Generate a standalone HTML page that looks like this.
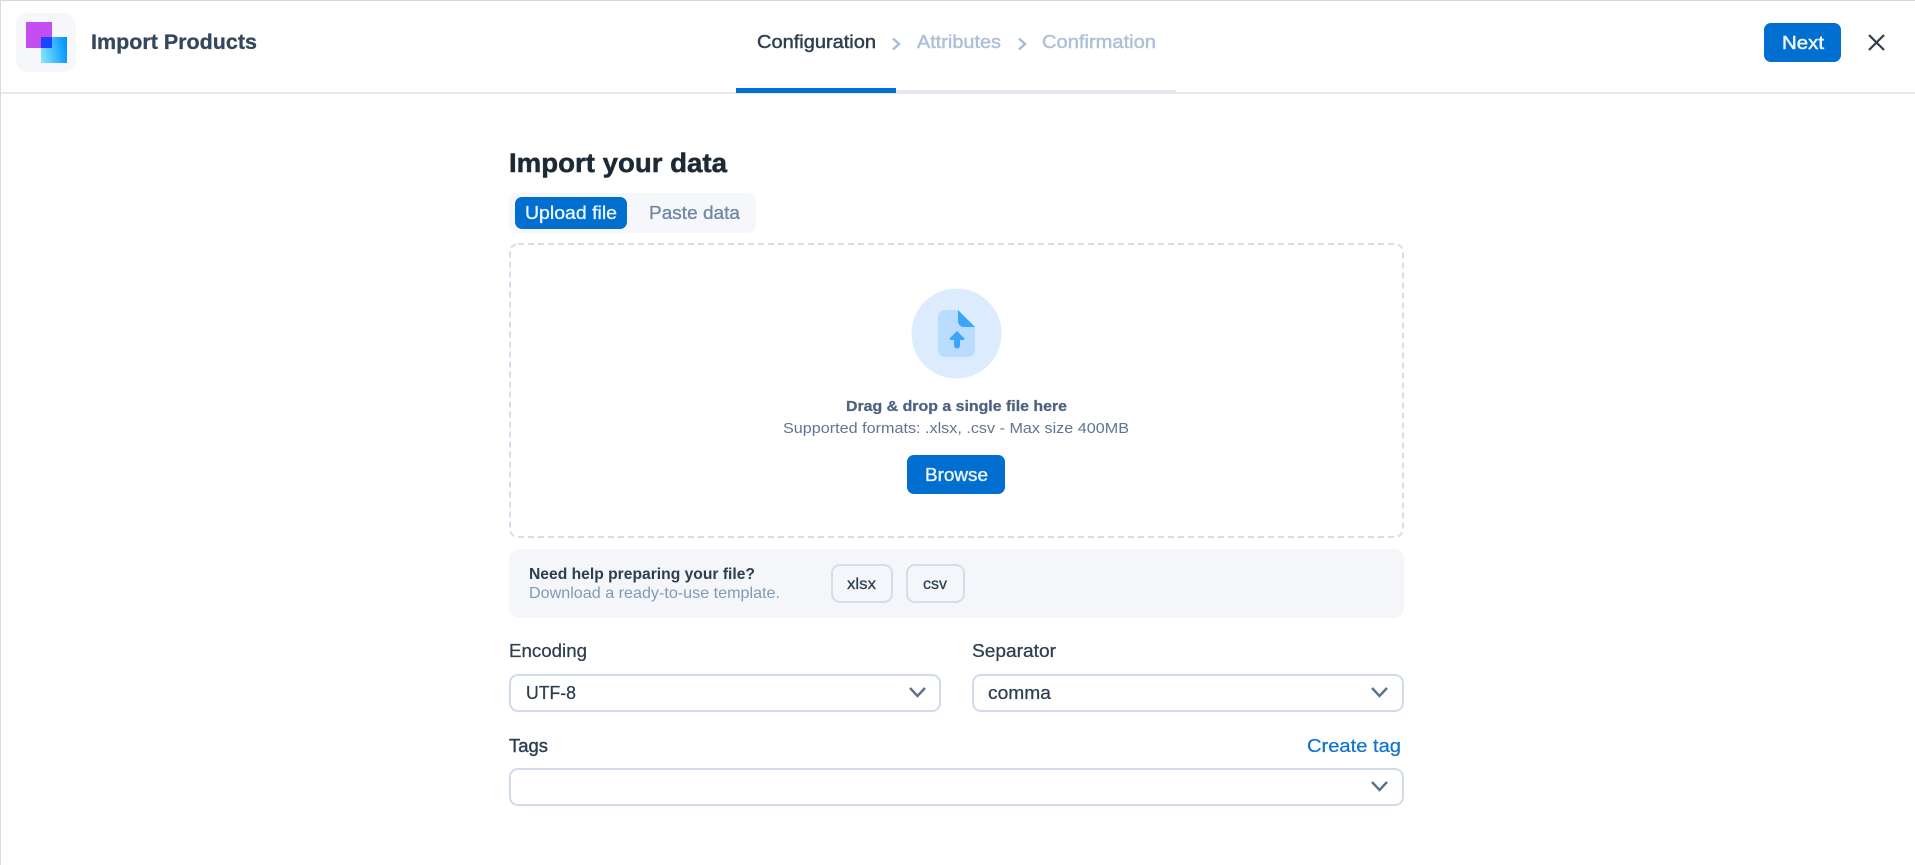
<!DOCTYPE html>
<html lang="en">
<head>
<meta charset="utf-8">
<title>Import Products</title>
<style>
html,body{margin:0;padding:0;width:1915px;height:865px;overflow:hidden;background:#fff}
svg{display:block}
text{font-family:"Liberation Sans",sans-serif}
</style>
</head>
<body>
<svg width="1915" height="865" viewBox="0 0 1915 865" xmlns="http://www.w3.org/2000/svg">
<defs>
<linearGradient id="g" x1="0" y1="0.6" x2="1" y2="0.4"><stop offset="0" stop-color="#7fe4fb"/><stop offset="1" stop-color="#0093ff"/></linearGradient>
</defs>
<rect width="1915" height="865" fill="#fff"/>
<rect x="0" y="0" width="1915" height="1" fill="#d9d9d9"/>
<rect x="0" y="0" width="1" height="865" fill="#dcdcdc"/>
<rect x="1" y="92" width="1914" height="2" fill="#e4e9f0"/>

<rect x="16" y="13" width="60" height="59" rx="12" fill="#f5f7fb"/>
<rect x="26" y="22" width="26" height="26" fill="#c54ef2"/>
<rect x="41" y="37" width="26" height="26" fill="url(#g)"/>
<rect x="41" y="37" width="11" height="11" fill="#1c44ff"/>
<text x="91" y="49" font-size="21" font-weight="700" fill="#34475c" stroke="#34475c" stroke-width=".3" textLength="166" lengthAdjust="spacingAndGlyphs">Import Products</text>

<text x="757" y="48" font-size="18" fill="#2d3e50" stroke="#2d3e50" stroke-width=".45" textLength="119" lengthAdjust="spacingAndGlyphs">Configuration</text>
<path d="M893 38.500l6 5.500-6 5.500" fill="none" stroke="#a9bdd3" stroke-width="2.500"/>
<text x="917" y="48" font-size="18" fill="#adc0d6" stroke="#adc0d6" stroke-width=".45" textLength="84" lengthAdjust="spacingAndGlyphs">Attributes</text>
<path d="M1019 38.500l6 5.500-6 5.500" fill="none" stroke="#a9bdd3" stroke-width="2.500"/>
<text x="1042" y="48" font-size="18" fill="#adc0d6" stroke="#adc0d6" stroke-width=".45" textLength="114" lengthAdjust="spacingAndGlyphs">Confirmation</text>
<rect x="896" y="90" width="280" height="3" fill="#e4e9f0"/>
<rect x="736" y="88" width="160" height="5" fill="#006fcf"/>

<rect x="1764" y="23" width="77" height="39" rx="7" fill="#006fcf"/>
<text x="1782" y="49" font-size="18" fill="#eef6fd" stroke="#eef6fd" stroke-width=".5" textLength="42" lengthAdjust="spacingAndGlyphs">Next</text>
<path d="M1869 35l15 15M1884 35l-15 15" stroke="#2f3d4d" stroke-width="2.200" fill="none"/>

<text x="509" y="172" font-size="27" font-weight="700" fill="#1d2935" stroke="#1d2935" stroke-width=".5" textLength="218" lengthAdjust="spacingAndGlyphs">Import your data</text>

<rect x="509" y="193" width="247" height="40" rx="8" fill="#f5f7fb"/>
<rect x="515" y="197" width="112" height="32" rx="7" fill="#006fcf"/>
<text x="525" y="219" font-size="18" fill="#eef6fd" stroke="#eef6fd" stroke-width=".3" textLength="92" lengthAdjust="spacingAndGlyphs">Upload file</text>
<text x="649" y="219" font-size="18" fill="#6f87a3" stroke="#6f87a3" stroke-width=".3" textLength="91" lengthAdjust="spacingAndGlyphs">Paste data</text>

<rect x="510" y="244" width="893" height="293" rx="8" fill="#fff" stroke="#d3dfeb" stroke-width="2" stroke-dasharray="6 4"/>
<circle cx="956.5" cy="333.5" r="45" fill="#dcebfe"/>
<path d="M945 310h13l17 17v23a7 7 0 0 1-7 7h-23a7 7 0 0 1-7-7v-33a7 7 0 0 1 7-7z" fill="#b9dcff"/>
<path d="M958 310l17 17h-11a6 6 0 0 1-6-6z" fill="#3ba5f9"/>
<path d="M957 331l7 7a1.200 1.200 0 0 1-.9 2h-3.100v5.500a3 3 0 0 1-6 0v-5.500h-3.100a1.200 1.200 0 0 1-.9-2z" fill="#3ba5f9"/>

<text x="846" y="411" font-size="15" font-weight="700" fill="#4d6280" stroke="#4d6280" stroke-width=".25" textLength="221" lengthAdjust="spacingAndGlyphs">Drag &amp; drop a single file here</text>
<text x="783" y="433" font-size="15" fill="#5f7690" textLength="346" lengthAdjust="spacingAndGlyphs">Supported formats: .xlsx, .csv - Max size 400MB</text>
<rect x="907" y="455" width="98" height="39" rx="7" fill="#006fcf"/>
<text x="925" y="481" font-size="18" fill="#eef6fd" stroke="#eef6fd" stroke-width=".35" textLength="63" lengthAdjust="spacingAndGlyphs">Browse</text>

<rect x="509" y="549" width="895" height="69" rx="10" fill="#f4f6fa"/>
<text x="529" y="579" font-size="16" font-weight="700" fill="#2d3e50" textLength="226" lengthAdjust="spacingAndGlyphs">Need help preparing your file?</text>
<text x="529" y="598" font-size="16" fill="#8299b5" textLength="251" lengthAdjust="spacingAndGlyphs">Download a ready-to-use template.</text>
<rect x="832" y="565" width="60" height="37" rx="8" fill="#f4f6fa" stroke="#d3dee9" stroke-width="2"/>
<text x="847" y="589" font-size="16" fill="#2d3e50" stroke="#2d3e50" stroke-width=".25" textLength="29" lengthAdjust="spacingAndGlyphs">xlsx</text>
<rect x="907" y="565" width="57" height="37" rx="8" fill="#f4f6fa" stroke="#d3dee9" stroke-width="2"/>
<text x="923" y="589" font-size="16" fill="#2d3e50" stroke="#2d3e50" stroke-width=".25" textLength="24" lengthAdjust="spacingAndGlyphs">csv</text>

<text x="509" y="657" font-size="18" fill="#2d3e50" stroke="#2d3e50" stroke-width=".25" textLength="78" lengthAdjust="spacingAndGlyphs">Encoding</text>
<rect x="510" y="675" width="430" height="36" rx="8" fill="#fff" stroke="#d1dce8" stroke-width="2"/>
<text x="526" y="699" font-size="18" fill="#2d3e50" stroke="#2d3e50" stroke-width=".25" textLength="50" lengthAdjust="spacingAndGlyphs">UTF-8</text>
<path d="M910 688l7.500 8 7.500-8" fill="none" stroke="#5a7190" stroke-width="2.400"/>

<text x="972" y="657" font-size="18" fill="#2d3e50" stroke="#2d3e50" stroke-width=".25" textLength="84" lengthAdjust="spacingAndGlyphs">Separator</text>
<rect x="973" y="675" width="430" height="36" rx="8" fill="#fff" stroke="#d1dce8" stroke-width="2"/>
<text x="988" y="699" font-size="18" fill="#2d3e50" stroke="#2d3e50" stroke-width=".25" textLength="63" lengthAdjust="spacingAndGlyphs">comma</text>
<path d="M1372 688l7.500 8 7.500-8" fill="none" stroke="#5a7190" stroke-width="2.400"/>

<text x="509" y="752" font-size="18" fill="#2d3e50" stroke="#2d3e50" stroke-width=".4" textLength="39" lengthAdjust="spacingAndGlyphs">Tags</text>
<text x="1307" y="752" font-size="18" fill="#1273d0" stroke="#1273d0" stroke-width=".25" textLength="94" lengthAdjust="spacingAndGlyphs">Create tag</text>
<rect x="510" y="769" width="893" height="36" rx="8" fill="#fff" stroke="#d1dce8" stroke-width="2"/>
<path d="M1372 782l7.500 8 7.500-8" fill="none" stroke="#5a7190" stroke-width="2.400"/>
</svg>
</body>
</html>
